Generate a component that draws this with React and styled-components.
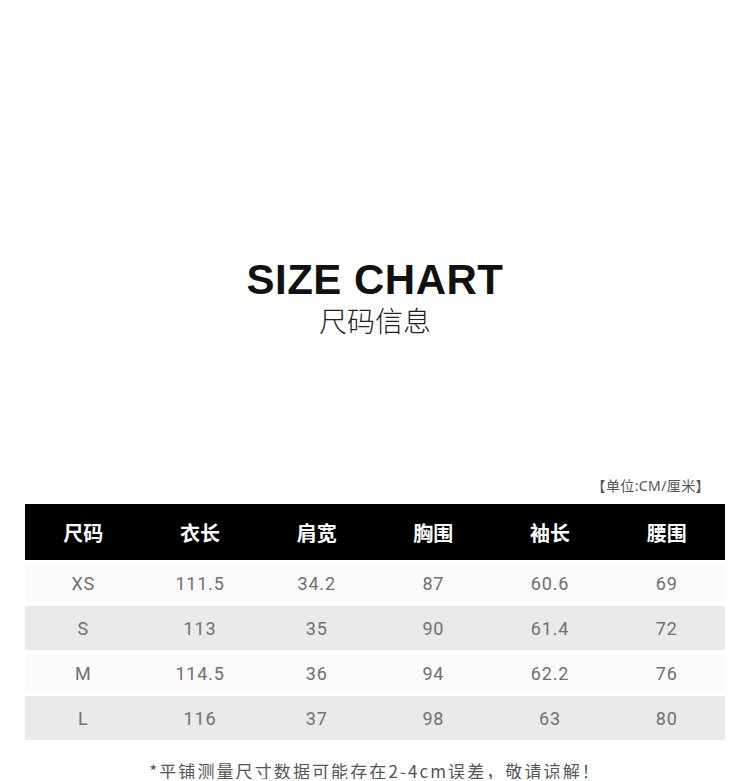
import React from "react";
import styled, { createGlobalStyle } from "styled-components";

const GlobalStyle = createGlobalStyle`
  html, body {
    margin: 0;
    padding: 0;
    background: #ffffff;
  }
  body {
    font-family: "Noto Sans", "Noto Sans CJK SC", sans-serif;
  }
`;

const columns = ["尺码", "衣长", "肩宽", "胸围", "袖长", "腰围"];

const rows = [
  ["XS", "111.5", "34.2", "87", "60.6", "69"],
  ["S", "113", "35", "90", "61.4", "72"],
  ["M", "114.5", "36", "94", "62.2", "76"],
  ["L", "116", "37", "98", "63", "80"],
];

function App() {
  return (
    <>
      <GlobalStyle />
      <Page>
        <TitleBlock>
          <Title>SIZE CHART</Title>
          <SubTitle>尺码信息</SubTitle>
        </TitleBlock>

        <UnitLabel>【单位:CM/厘米】</UnitLabel>

        <Table>
          <HeadRow>
            {columns.map((c) => (
              <HeadCell key={c}>{c}</HeadCell>
            ))}
          </HeadRow>
          {rows.map((r, i) => (
            <Row key={r[0]} $alt={i % 2 === 1}>
              {r.map((v, j) => (
                <Cell key={j}>{v}</Cell>
              ))}
            </Row>
          ))}
        </Table>

        <Note>*平铺测量尺寸数据可能存在2-4cm误差，敬请谅解！</Note>
      </Page>
    </>
  );
}

export default App;

const Page = styled.div`
  width: 750px;
  padding: 260px 25px 0;
  box-sizing: border-box;
  display: flex;
  flex-direction: column;
`;

const TitleBlock = styled.div`
  display: flex;
  flex-direction: column;
  align-items: center;
`;

const Title = styled.div`
  font-family: "Liberation Sans", Arial, sans-serif;
  font-weight: 700;
  font-size: 42px;
  line-height: 40px;
  letter-spacing: 0.5px;
  color: #111111;
`;

const SubTitle = styled.div`
  margin-top: 6px;
  font-family: "Noto Sans CJK SC", sans-serif;
  font-weight: 300;
  font-size: 28px;
  line-height: 28px;
  color: #222222;
`;

const UnitLabel = styled.div`
  margin-top: 144px;
  align-self: flex-end;
  padding-right: 15px;
  font-family: "Noto Sans", "Noto Sans CJK SC", sans-serif;
  font-size: 14px;
  line-height: 16px;
  letter-spacing: 0.4px;
  color: #555555;
`;

const Table = styled.div`
  margin-top: 10px;
  width: 700px;
  display: flex;
  flex-direction: column;
  gap: 5px;
`;

const HeadRow = styled.div`
  display: grid;
  grid-template-columns: repeat(6, 1fr);
  height: 56px;
  align-items: center;
  background: #000000;
`;

const HeadCell = styled.div`
  text-align: center;
  font-family: "Noto Sans CJK SC", sans-serif;
  font-weight: 700;
  font-size: 20px;
  color: #ffffff;
`;

const Row = styled.div`
  display: grid;
  grid-template-columns: repeat(6, 1fr);
  align-items: center;
  height: ${(p) => (p.$alt ? "44px" : "36px")};
  background: ${(p) => (p.$alt ? "#eaeaea" : "#fafafa")};
`;

const Cell = styled.div`
  text-align: center;
  font-family: Roboto, "Liberation Sans", sans-serif;
  font-size: 18px;
  letter-spacing: 0.8px;
  color: #707070;
`;

const Note = styled.div`
  margin-top: 23px;
  text-align: center;
  font-family: "Noto Sans CJK SC", sans-serif;
  font-size: 17px;
  line-height: 16px;
  letter-spacing: 2.1px;
  color: #555555;
`;
